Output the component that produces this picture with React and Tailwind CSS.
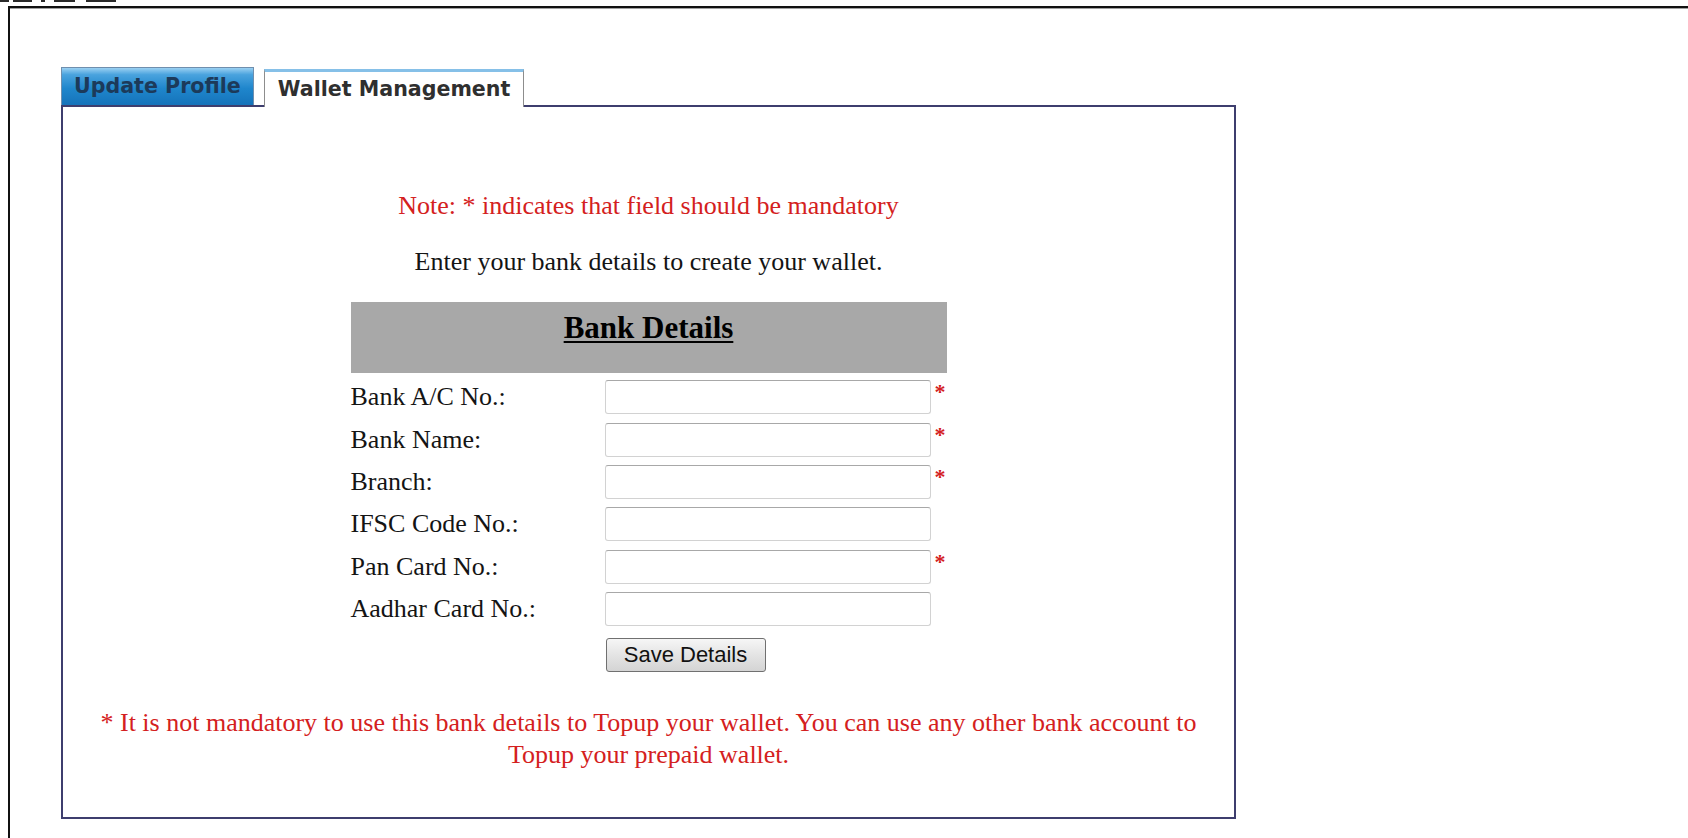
const serif = { fontFamily: '"Liberation Serif", "Times New Roman", serif' };

const fields = [
  { label: "Bank A/C No.:", required: true },
  { label: "Bank Name:", required: true },
  { label: "Branch:", required: true },
  { label: "IFSC Code No.:", required: false },
  { label: "Pan Card No.:", required: true },
  { label: "Aadhar Card No.:", required: false },
];

function Tabs() {
  return (
    <div className="flex items-end gap-[10px] font-['DejaVu_Sans',Verdana,sans-serif] text-[20.6px] font-bold">
      <div className="flex h-[38px] items-center border border-b-0 border-[#6f8fae] bg-[linear-gradient(to_bottom,#9ad0f2_0%,#4aa3de_18%,#1f86cc_55%,#1573ba_100%)] px-[12px] text-[#1c3a5a]">
        Update Profile
      </div>
      <div className="relative z-10 -mb-[2px] flex h-[38px] items-center border-x border-t-[3px] border-x-[#8d8d8d] border-t-[#86c0e8] bg-white px-[13px] text-[#2f2f2f]">
        Wallet Management
      </div>
    </div>
  );
}

function FieldRow({ label, required }) {
  return (
    <div className="flex h-[42.4px] items-center">
      <span className="w-[254px] text-[26px] leading-none text-[#141414]">{label}</span>
      <input
        type="text"
        className="h-[34px] w-[326px] rounded-[3px] border border-[#d2d2d2] border-t-[#a8a8a8] bg-white px-2 outline-none"
      />
      {required && (
        <span className="-mt-[10px] ml-[4px] text-[22px] font-bold leading-none text-[#d42020]">*</span>
      )}
    </div>
  );
}

function BankForm() {
  return (
    <div className="mt-[26px] w-[596px]">
      <div className="h-[71px] bg-[#a8a8a8] pt-[8px] text-center">
        <h3 className="text-[31px] font-bold leading-[35px] text-black underline decoration-2 underline-offset-[3px]">
          Bank Details
        </h3>
      </div>
      <div className="mt-[3px]">
        {fields.map((f) => (
          <FieldRow key={f.label} label={f.label} required={f.required} />
        ))}
      </div>
      <div className="mt-[8px] pl-[255px]">
        <button className="h-[34px] w-[160px] rounded-[3px] border border-[#707070] bg-[linear-gradient(to_bottom,#f6f6f6,#e4e4e4_50%,#d4d4d4)] font-['Liberation_Sans',Arial,sans-serif] text-[22px] leading-none text-[#111]">
          Save Details
        </button>
      </div>
    </div>
  );
}

// bottoms of a heading that sits above the visible area
const stubs = [
  [0, 9],
  [13, 19],
  [41, 4],
  [54, 21],
  [86, 30],
];

export default function App() {
  return (
    <div className="min-h-[838px] w-[1688px] overflow-hidden bg-white" style={serif}>
      <div className="relative h-[6px]">
        {stubs.map(([x, w]) => (
          <span key={x} className="absolute top-0 h-[2px] bg-[#2a2a2a]" style={{ left: x, width: w }} />
        ))}
      </div>
      <div className="ml-[8px] min-h-[832px] border-l-2 border-t-2 border-[#111] pl-[51px] pt-[59px] shadow-[inset_0_1px_0_#a0a0a0]">
        <Tabs />
        <div className="flex h-[714px] w-[1175px] flex-col items-center border-2 border-[#3e3e6e] bg-white pt-[84px]">
          <p className="text-[26px] leading-[29px] text-[#d42020]">
            Note: * indicates that field should be mandatory
          </p>
          <p className="mt-[27px] text-[26px] leading-[29px] text-[#141414]">
            Enter your bank details to create your wallet.
          </p>
          <BankForm />
          <p className="mt-[35px] text-center text-[26px] leading-[32px] text-[#d42020]">
            * It is not mandatory to use this bank details to Topup your wallet. You can use any other bank account to
            <br />
            Topup your prepaid wallet.
          </p>
        </div>
      </div>
    </div>
  );
}
